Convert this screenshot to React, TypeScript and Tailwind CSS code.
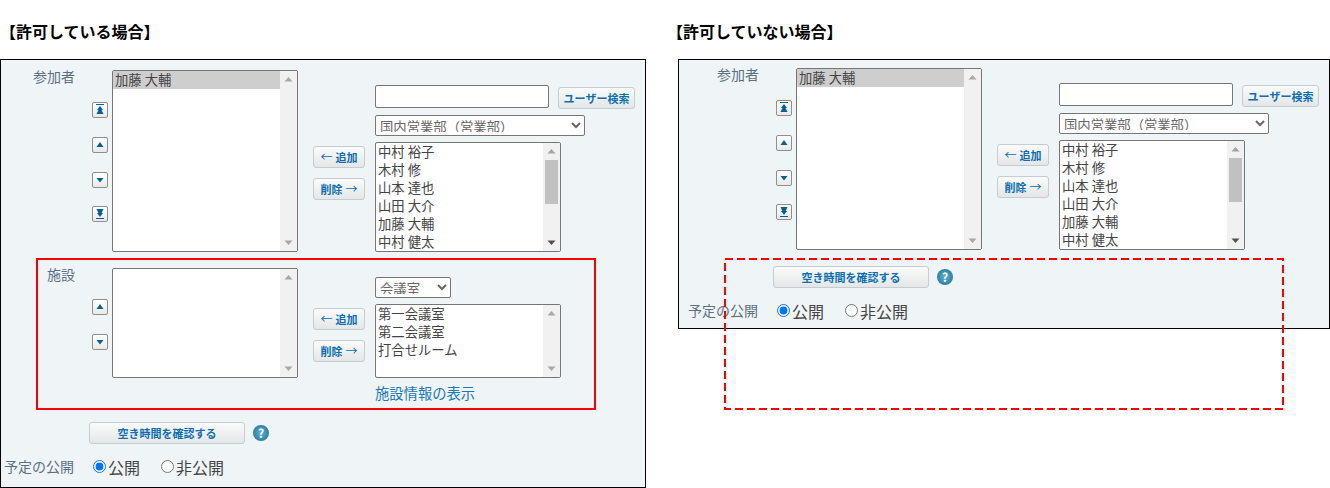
import { ReactNode } from 'react';

const font = "font-['Noto_Sans_CJK_JP','Noto_Sans',sans-serif]";

function SmallBtn({ children, className = '' }: { children: ReactNode; className?: string }) {
  return (
    <button className={`h-[22px] flex items-center justify-center rounded-[3px] border border-[#c3cdd2] bg-linear-to-b from-[#fbfbfb] to-[#e4e6e7] text-[11px] font-bold text-[#0a6eb0] whitespace-nowrap ${className}`}>
      {children}
    </button>
  );
}

function ArrowBtn({ kind, className = '' }: { kind: 'top' | 'up' | 'down' | 'bottom'; className?: string }) {
  return (
    <button className={`w-4 h-4 rounded-[2px] border border-[#8f8f8f] bg-linear-to-b from-white to-[#e9e9e9] flex items-center justify-center ${className}`}>
      <svg width="14" height="14" viewBox="0 0 14 14" fill="#00609a">
        {kind === 'top' && <path d="M3 1h8v1H3zM7 3l3 4H8.500l2 4h-7l2-4H4z" />}
        {kind === 'up' && <path d="M7 4l3.500 5h-7z" />}
        {kind === 'down' && <path d="M3.500 5h7L7 9.500z" />}
        {kind === 'bottom' && <path d="M3 11h8v1H3zM3.500 2h7l-2 4H10l-3 4-3-4h1.500z" />}
      </svg>
    </button>
  );
}

function ListBox({ items, selected, thumb, className = '' }: { items: string[]; selected?: boolean; thumb?: boolean; className?: string }) {
  return (
    <div className={`w-[186px] flex rounded-[2px] border border-[#767676] bg-white overflow-hidden ${className}`}>
      <div className="flex-1 min-w-0 text-[13.33px] leading-[18px] text-[#444]">
        {items.map((item) => (
          <div key={item} className={`h-[18px] pl-[2px] whitespace-nowrap ${selected ? 'bg-[#cecece]' : ''}`}>
            {item}
          </div>
        ))}
      </div>
      <div className="w-[17px] flex flex-col bg-[#f1f1f1]">
        <svg className="h-[17px] shrink-0" width="17" height="17" viewBox="0 0 17 17" fill={thumb ? '#a3a3a3' : '#a8a8a8'}>
          <path d="M8.500 6l4 4.500h-8z" />
        </svg>
        <div className="flex-1 flex flex-col">
          {thumb && <div className="h-[44px] mx-[2px] bg-[#c1c1c1]" />}
        </div>
        <svg className="h-[17px] shrink-0" width="17" height="17" viewBox="0 0 17 17" fill={thumb ? '#505050' : '#a8a8a8'}>
          <path d="M4.500 6.500h8l-4 4.500z" />
        </svg>
      </div>
    </div>
  );
}

function Select({ value, className = '' }: { value: string; className?: string }) {
  return (
    <select defaultValue={value} className={`h-[21px] block rounded-[2px] border border-[#767676] bg-white pb-[3px] text-[13.33px] leading-[18px] text-[#666] ${className}`}>
      <option>{value}</option>
    </select>
  );
}

function Label({ children, className = '' }: { children: ReactNode; className?: string }) {
  return <div className={`-mt-[4px] text-right text-[14px] leading-[20px] text-[#5a7084] ${className}`}>{children}</div>;
}

const members = ['中村 裕子', '木村 修', '山本 達也', '山田 大介', '加藤 大輔', '中村 健太'];

function AddRemove({ className = '' }: { className?: string }) {
  return (
    <div className={`ml-[15px] w-[52px] flex flex-col gap-[10px] ${className}`}>
      <SmallBtn className="w-[52px]">
        <span className="font-normal text-[12px] mr-[3px]">←</span>追加
      </SmallBtn>
      <SmallBtn className="w-[52px]">
        削除<span className="font-normal text-[12px] ml-[3px]">→</span>
      </SmallBtn>
    </div>
  );
}

function Participants({ labelWidth }: { labelWidth: string }) {
  return (
    <div className="flex items-start">
      <Label className={labelWidth}>参加者</Label>
      <div className="ml-[17px] w-4 pt-[32px] flex flex-col gap-[19px]">
        <ArrowBtn kind="top" />
        <ArrowBtn kind="up" />
        <ArrowBtn kind="down" />
        <ArrowBtn kind="bottom" className="-mt-px" />
      </div>
      <ListBox items={['加藤 大輔']} selected className="ml-[4px] h-[182px]" />
      <AddRemove className="mt-[76px]" />
      <div className="ml-[10px] pt-[15px]">
        <div className="flex items-start h-[23px]">
          <input className="w-[174px] h-[23px] rounded-[2px] border border-[#767676] bg-white" />
          <SmallBtn className="ml-[9px] mt-[2px] w-[77px]">ユーザー検索</SmallBtn>
        </div>
        <Select value="国内営業部（営業部）" className="mt-[7px] w-[210px]" />
        <ListBox items={members} thumb className="mt-[6px] h-[110px]" />
      </div>
    </div>
  );
}

function Facility() {
  return (
    <div className="ml-[35px] mt-[6px] w-[560px] h-[152px] border-2 border-[#ff0000] pt-[8px] flex items-start">
      <Label className="w-[37px]">施設</Label>
      <div className="ml-[17px] w-4 pt-[31px] flex flex-col gap-[19px]">
        <ArrowBtn kind="up" />
        <ArrowBtn kind="down" />
      </div>
      <ListBox items={[]} className="ml-[4px] h-[110px]" />
      <AddRemove className="mt-[40px]" />
      <div className="ml-[10px] pt-[9px]">
        <Select value="会議室" className="w-[76px]" />
        <ListBox items={['第一会議室', '第二会議室', '打合せルーム']} className="mt-[6px] h-[74px]" />
        <a className="block mt-[5px] text-[14.3px] leading-[20px] text-[#1a7ab5]">施設情報の表示</a>
      </div>
    </div>
  );
}

function HelpIcon() {
  return (
    <div className="ml-[8px] w-4 h-4 rounded-full bg-radial from-[#5fb4d2] to-[#0f6c90] flex items-center justify-center text-[12px] leading-none font-bold text-white">
      ?
    </div>
  );
}

function Footer({ name, buttonIndent, labelIndent }: { name: string; buttonIndent: string; labelIndent: string }) {
  return (
    <>
      <div className={`flex items-center ${buttonIndent}`}>
        <SmallBtn className="w-[156px]">空き時間を確認する</SmallBtn>
        <HelpIcon />
      </div>
      <div className={`mt-[12px] flex items-center h-[20px] ${labelIndent}`}>
        <span className="text-[14px] leading-[20px] text-[#5a7084] whitespace-nowrap">予定の公開</span>
        <label className="ml-[19px] flex items-center text-[16px] leading-[20px] text-[#444]">
          <input type="radio" name={name} defaultChecked className="w-[13px] h-[13px] mr-[2px]" />
          <span className="mt-[1px]">公開</span>
        </label>
        <label className="ml-[21px] flex items-center text-[16px] leading-[20px] text-[#444]">
          <input type="radio" name={name} className="w-[13px] h-[13px] mr-[2px]" />
          <span className="mt-[1px]">非公開</span>
        </label>
      </div>
    </>
  );
}

export default function App() {
  return (
    <div className={`relative w-[1330px] h-[488px] bg-white flex overflow-hidden ${font}`}>
      <div className="w-[646px] shrink-0">
        <h2 className="h-[59px] pt-[19px] text-[16px] leading-[24px] font-bold text-black">【許可している場合】</h2>
        <div className="h-[429px] border border-black bg-[#eff4f7] pt-[10px]">
          <Participants labelWidth="w-[74px]" />
          <Facility />
          <div className="h-[12px]" />
          <Footer name="pub-allowed" buttonIndent="ml-[88px]" labelIndent="pl-[3px]" />
        </div>
      </div>
      <div className="ml-[32px] w-[652px] shrink-0">
        <h2 className="-ml-[11px] h-[59px] pt-[19px] text-[16px] leading-[24px] font-bold text-black">【許可していない場合】</h2>
        <div className="h-[270px] border border-black bg-[#eff4f7] pt-[8px]">
          <Participants labelWidth="w-[80px]" />
          <div className="h-[16px]" />
          <Footer name="pub-denied" buttonIndent="ml-[94px]" labelIndent="pl-[9px]" />
        </div>
      </div>
      <svg className="absolute left-[724px] top-[258px]" width="560" height="152" fill="none">
        <rect x="1" y="1" width="558" height="150" stroke="#ff0000" strokeWidth="2" strokeDasharray="8 4" />
      </svg>
    </div>
  );
}
